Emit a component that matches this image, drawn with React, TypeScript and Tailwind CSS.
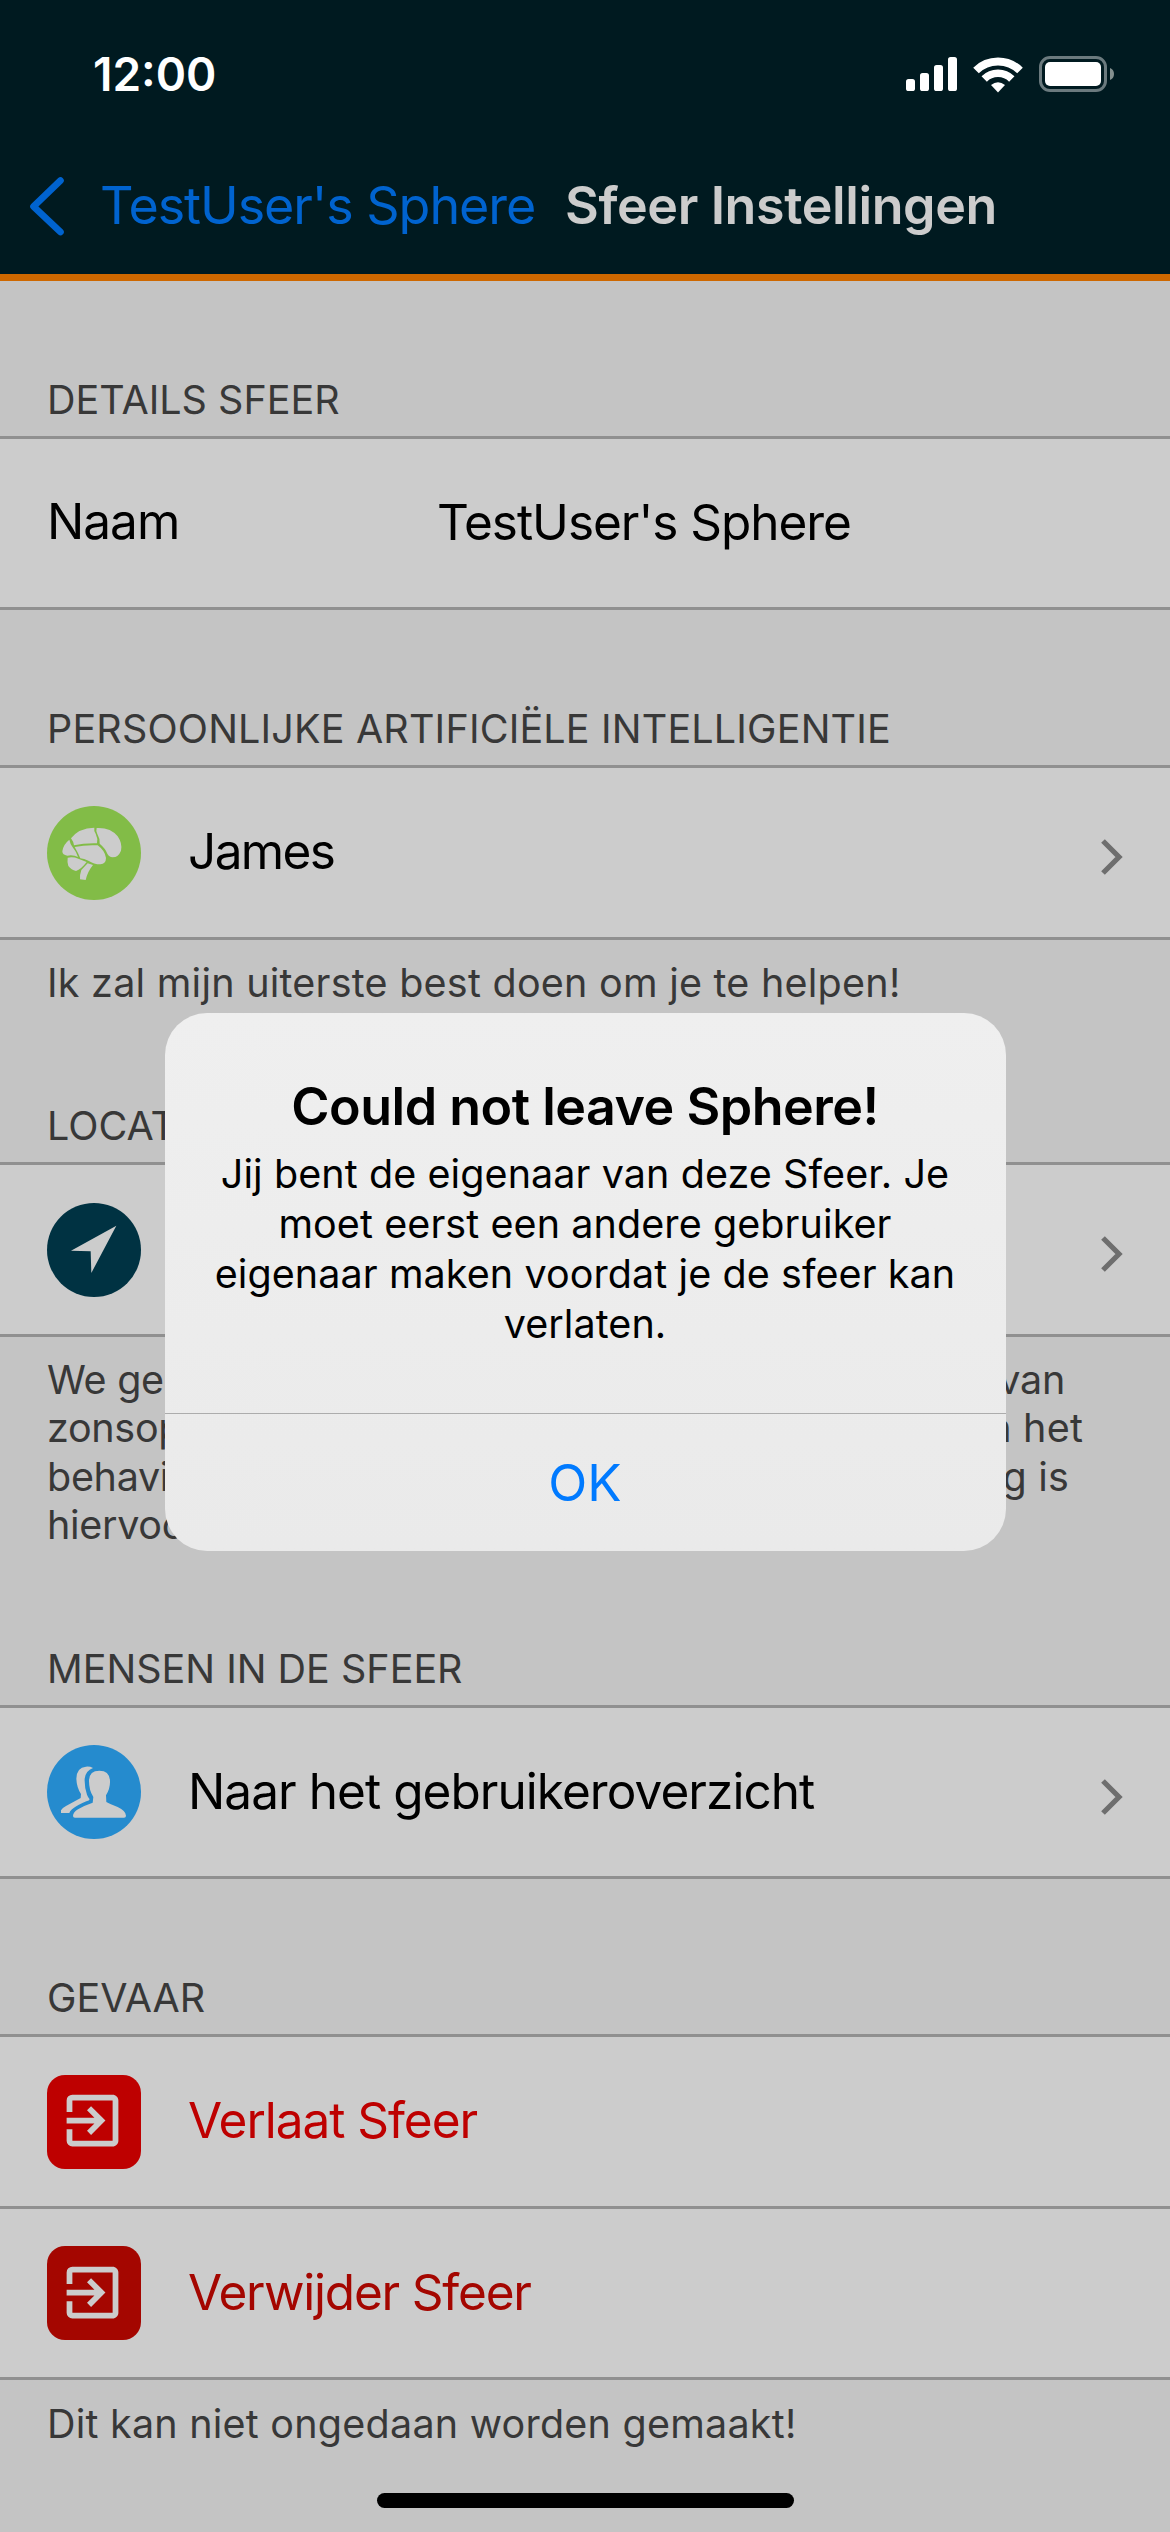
import React from "react";
import type { ReactNode } from "react";
import { MdExitToApp } from "react-icons/md";

function StatusBar() {
  return (
    <div className="flex h-[148px] items-center justify-between pr-[55px] pl-[93px] text-white">
      <span className="text-[46px] leading-[56px] font-semibold">12:00</span>
      <div className="flex items-center">
        <svg className="h-[36px] w-[54px]" viewBox="0 0 54 36" fill="currentColor">
          <rect x="1" y="23" width="9" height="12" rx="2.6" />
          <rect x="15" y="17" width="9" height="18" rx="2.6" />
          <rect x="29" y="9" width="9" height="26" rx="2.6" />
          <rect x="43" y="1" width="9" height="34" rx="2.6" />
        </svg>
        <svg className="ml-[13px] h-[38px] w-[52px]" viewBox="0 0 52 38" fill="none" stroke="currentColor">
          <path d="M4 15.5 A31.5 31.5 0 0 1 48 15.5" strokeWidth="8" />
          <path d="M12.2 24 A19.6 19.6 0 0 1 39.8 24" strokeWidth="7.6" />
          <path d="M19 30 Q26 24.6 33 30 L26 37.4 Z" fill="currentColor" stroke="none" />
        </svg>
        <svg className="ml-[15px] h-[36px] w-[76px]" viewBox="0 0 76 36">
          <rect x="1.5" y="1.5" width="65" height="33" rx="9.5" fill="none" stroke="#6b7a7e" strokeWidth="3" />
          <rect x="6" y="6" width="56" height="24" rx="5" fill="white" />
          <path d="M71 12 Q75 13.6 75 18 Q75 22.4 71 24 Z" fill="#84908f" />
        </svg>
      </div>
    </div>
  );
}

function NavBar() {
  return (
    <div className="flex h-[116px] items-center pl-[28px]">
      <svg className="h-[60px] w-[36px] text-[#0063cf]" viewBox="0 0 36 60" fill="none" stroke="currentColor" strokeWidth="6.6" strokeLinecap="round" strokeLinejoin="round">
        <path d="M32.5 4.5 L5.5 30.5 L32.5 56" />
      </svg>
      <span className="ml-[36px] w-[465px] text-[52px] leading-[64px] tracking-[-1.06px] whitespace-nowrap text-[#0063cf]">
        TestUser's Sphere
      </span>
      <span className="text-[52px] leading-[64px] font-semibold tracking-[-0.4px] whitespace-nowrap text-[#cccccc]">
        Sfeer Instellingen
      </span>
    </div>
  );
}

function Label({ children, className }: { children: ReactNode; className: string }) {
  return (
    <div className={`flex items-end pb-[12px] pl-[47px] text-[39.5px] leading-[48px] whitespace-nowrap text-[#383838] ${className}`}>
      {children}
    </div>
  );
}

function Row({ children, className = "h-[175px]" }: { children: ReactNode; className?: string }) {
  return (
    <div className={`flex items-center border-y-[3px] border-[#909090] bg-[#cccccc] pr-[47px] pl-[47px] ${className}`}>
      {children}
    </div>
  );
}

function RowText({ children, className }: { children: ReactNode; className: string }) {
  return (
    <span className={`-mt-[3px] ml-[47px] text-[49.5px] leading-[60px] whitespace-nowrap ${className}`}>{children}</span>
  );
}

function Chevron() {
  return (
    <svg className="mt-[9px] ml-auto h-[36px] w-[22px]" viewBox="0 0 22 36" fill="none" stroke="#6e6e6e" strokeWidth="5.2">
      <path d="M2 2 L18 18 L2 34" />
    </svg>
  );
}

function BrainIcon() {
  return (
    <svg className="size-[94px]" viewBox="9 16 282 282">
      <circle cx="150" cy="157" r="141" fill="#82bc47" />
      <g fill="#cccccc">
        <path d="M81 113 Q104 82 151 81 Q149 89 155 99 Q162 113 159 128 Q120 127 90 134 Q88 122 81 113 Z" />
        <path d="M158 82 Q200 80 221 107 Q236 129 231 150 Q223 170 206 170 Q195 169 190 159 Q184 143 167 129 Q168 113 160 100 Q155 91 158 82 Z" />
        <path d="M92 139 Q125 132 161 134 Q183 150 186 172 Q186 189 169 191 Q150 191 133 180 Q120 174 109 173 Q103 158 92 139 Z" />
        <path d="M76 117 Q79 132 86 140 Q96 152 102 169 Q88 162 70 165 Q55 163 55 152 Q57 132 76 117 Z" />
        <path d="M71 171 Q88 168 103 174 L128 184 Q111 206 96 211 Q82 208 73 196 Q69 185 71 171 Z" />
        <path d="M131 188 L147 193 Q131 212 125 238 L108 236 Q107 222 112 208 Z" />
      </g>
    </svg>
  );
}

function LocationIcon() {
  return (
    <svg className="size-[94px]" viewBox="141 367 282 282">
      <circle cx="282" cy="508" r="141" fill="#003242" />
      <path d="M349 435 L213 510 L272 512 L274 577 Z" fill="#cccccc" />
    </svg>
  );
}

function PeopleIcon() {
  return (
    <svg className="size-[94px]" viewBox="9 9 282 282">
      <circle cx="150" cy="150" r="141" fill="#258bce" />
      <g fill="#cccccc">
        <path d="M51 213 L51 205 Q55 197 66 192 Q88 180 110 168 L111 156 Q98 136 97 110 Q98 76 126 74 Q138 73 147 78 Q125 86 122 110 Q121 134 129 158 Q132 166 137 172 Q136 176 127 178 Q98 190 84 202 Q77 208 76 213 Z" />
        <path d="M135 117 Q135 86 166 86 Q197 86 198 117 Q199 139 186 160 L187 180 Q199 187 221 195 Q246 207 246 221 Q246 227 240 227 L93 227 Q87 227 87 222 Q87 211 102 202 Q124 189 146 182 L148 165 Q135 145 135 117 Z" />
      </g>
    </svg>
  );
}

function ExitIcon({ className }: { className: string }) {
  return (
    <div className={`flex size-[94px] items-center justify-center rounded-[18px] pr-[3px] pb-[2px] ${className}`}>
      <MdExitToApp className="size-[69px] text-[#cccccc]" />
    </div>
  );
}

function Alert() {
  return (
    <div className="absolute inset-x-0 top-[1013px] flex justify-center">
      <div className="flex h-[538px] w-[841px] flex-col overflow-hidden rounded-[42px] bg-[#ededed] bg-linear-to-b from-[#efefef] to-[#eaeaea] text-center text-black">
        <div className="h-[401px] border-b border-[#acacac] pt-[64px]">
          <h1 className="text-[52px] leading-[60px] font-semibold tracking-[-0.5px]">Could not leave Sphere!</h1>
          <p className="mt-[12px] text-[39.5px] leading-[50px] tracking-[0.08px]">
            Jij bent de eigenaar van deze Sfeer. Je
            <br />
            moet eerst een andere gebruiker
            <br />
            eigenaar maken voordat je de sfeer kan
            <br />
            verlaten.
          </p>
        </div>
        <button className="flex-1 text-[51px] leading-[60px] text-[#007aff]">OK</button>
      </div>
    </div>
  );
}

export default function App() {
  return (
    <div className="relative h-[2532px] w-[1170px] overflow-hidden bg-[#c4c4c4] font-['Inter',sans-serif]">
      <header className="h-[281px] border-b-[7px] border-[#ce6800] bg-[#001a20]">
        <StatusBar />
        <NavBar />
      </header>

      <Label className="h-[155px]">DETAILS SFEER</Label>
      <Row className="h-[174px]">
        <span className="-mt-[4px] w-[390px] text-[49.5px] leading-[60px] tracking-[-1px] text-black">Naam</span>
        <span className="-mt-[2px] text-[49.5px] leading-[60px] tracking-[-1.04px] text-black">TestUser's Sphere</span>
      </Row>

      <Label className="h-[155px] tracking-[0.167px]">PERSOONLIJKE ARTIFICIËLE INTELLIGENTIE</Label>
      <Row>
        <BrainIcon />
        <RowText className="tracking-[-1.6px] text-black">James</RowText>
        <Chevron />
      </Row>
      <p className="h-[67px] pt-[19px] pl-[47px] text-[39.5px] leading-[48px] tracking-[0.24px] text-[#383838]">
        Ik zal mijn uiterste best doen om je te helpen!
      </p>

      <Label className="h-[155px]">LOCATIE</Label>
      <Row>
        <LocationIcon />
        <Chevron />
      </Row>
      <div className="h-[213px] pt-[19px] pl-[47px] text-[39.5px] leading-[48.3px] tracking-[-0.3px] text-[#383838]">
        <div className="flex w-[1018px] justify-between">
          <span>We gebruiken de locatie</span>
          <span>tijden van</span>
        </div>
        <div className="flex w-[1036px] justify-between">
          <span>zonsopkomst en</span>
          <span className="tracking-[0.2px]">van het</span>
        </div>
        <div className="flex w-[1022px] justify-between">
          <span>behaviour van de</span>
          <span className="tracking-[0.2px]">nauwkeurig is</span>
        </div>
        <div>hiervoor genoeg.</div>
      </div>

      <Label className="h-[155px]">MENSEN IN DE SFEER</Label>
      <Row className="h-[174px]">
        <PeopleIcon />
        <RowText className="tracking-[-0.95px] text-black">Naar het gebruikeroverzicht</RowText>
        <Chevron />
      </Row>

      <Label className="h-[155px]">GEVAAR</Label>
      <Row>
        <ExitIcon className="bg-[#be0000]" />
        <RowText className="tracking-[-1.04px] text-[#be0000]">Verlaat Sfeer</RowText>
      </Row>
      <Row className="-mt-[3px] h-[174px]">
        <ExitIcon className="bg-[#a40600]" />
        <RowText className="tracking-[-1.2px] text-[#a40600]">Verwijder Sfeer</RowText>
      </Row>
      <p className="pt-[20px] pl-[47px] text-[39.5px] leading-[48px] tracking-[0.23px] text-[#383838]">
        Dit kan niet ongedaan worden gemaakt!
      </p>

      <Alert />
      <div className="absolute bottom-[24px] left-[377px] h-[15px] w-[417px] rounded-full bg-black" />
    </div>
  );
}
